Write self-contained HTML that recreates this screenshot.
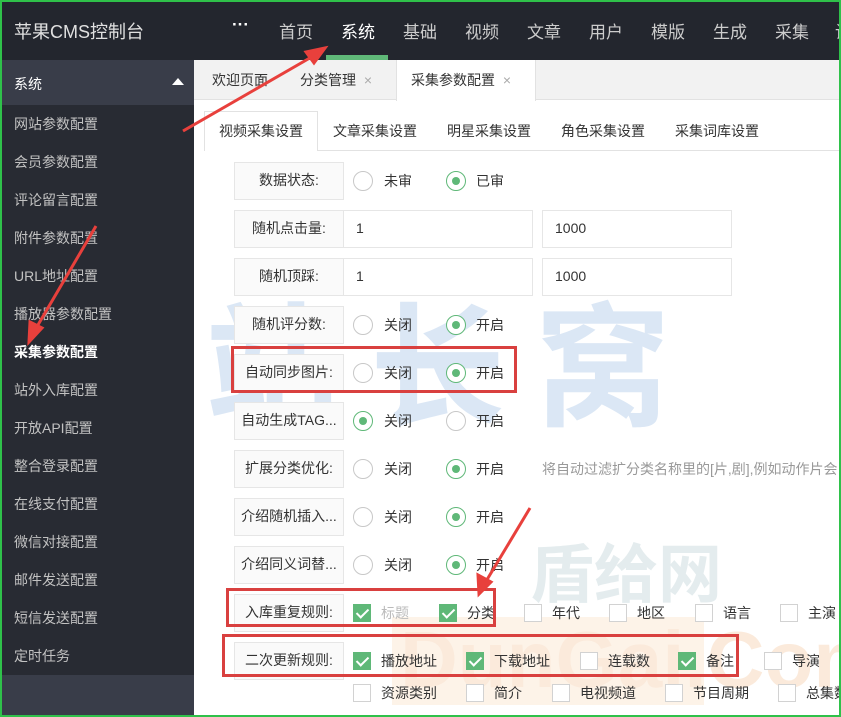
<!DOCTYPE html><html><head><meta charset="utf-8"><style>
*{margin:0;padding:0;box-sizing:border-box}
body{width:841px;height:717px;overflow:hidden;position:relative;background:#fff;font-family:"Liberation Sans","Noto Sans CJK SC",sans-serif;font-size:14px;color:#333}
.a{position:absolute}
span{white-space:nowrap}
#top{left:0;top:0;width:841px;height:60px;background:#23262e}
#top span{position:absolute;top:18px;font-size:17px;color:#ccc}
#side{left:0;top:60px;width:194px;height:657px;background:#282b33}
.si{position:absolute;left:14px;font-size:14px;color:#c2c2c2}
.lab{position:absolute;left:234px;width:110px;height:38px;border:1px solid #e6e6e6;background:#fafafa;text-align:center;line-height:34px;font-size:14px;color:#333;white-space:nowrap}
.inp{position:absolute;height:38px;border:1px solid #e6e6e6;background:#fff;line-height:34px;padding-left:12px;font-size:14px}
.r{position:absolute;width:20px;height:20px;border:1px solid #c8c8c8;border-radius:50%;background:#fff}
.r.on{border-color:#5fb878}
.r.on:after{content:"";position:absolute;left:5px;top:5px;width:8px;height:8px;border-radius:50%;background:#5fb878}
.t{position:absolute;font-size:14px;color:#333}
.c{position:absolute;width:18px;height:18px;border:1px solid #d2d2d2;background:#fff}
.c.on{background:#5fb878;border-color:#5fb878}
.c.on:after{content:"";position:absolute;left:5px;top:1px;width:5px;height:10px;border:solid #fff;border-width:0 2px 2px 0;transform:rotate(45deg)}
.red{position:absolute;border:3px solid #d9403f}
</style></head><body>
<div id="top" class="a">
<span style="left:14px;font-size:18px;color:#e0e0e0">苹果CMS控制台</span>
<span style="left:232px;top:20px;color:#fff;font-weight:bold;line-height:10px">···</span>
<span style="left:279px">首页</span><span style="left:341px;color:#fff">系统</span><span style="left:403px">基础</span><span style="left:465px">视频</span><span style="left:527px">文章</span><span style="left:589px">用户</span><span style="left:651px">模版</span><span style="left:713px">生成</span><span style="left:775px">采集</span><span style="left:835px">设</span>
<div class="a" style="left:326px;top:55px;width:62px;height:5px;background:#5fb878"></div>
</div>
<div id="side" class="a">
<div class="a" style="left:0;top:0;width:194px;height:45px;background:#393d49"></div>
<span class="si" style="top:14px;color:#fff">系统</span>
<div class="a" style="left:172px;top:18px;border:6px solid transparent;border-bottom:7px solid #fff;border-top:0"></div>
<span class="si" style="top:54px">网站参数配置</span><span class="si" style="top:92px">会员参数配置</span><span class="si" style="top:130px">评论留言配置</span><span class="si" style="top:168px">附件参数配置</span><span class="si" style="top:206px">URL地址配置</span><span class="si" style="top:244px">播放器参数配置</span><span class="si" style="top:282px;color:#fff;font-weight:bold">采集参数配置</span><span class="si" style="top:320px">站外入库配置</span><span class="si" style="top:358px">开放API配置</span><span class="si" style="top:396px">整合登录配置</span><span class="si" style="top:434px">在线支付配置</span><span class="si" style="top:472px">微信对接配置</span><span class="si" style="top:510px">邮件发送配置</span><span class="si" style="top:548px">短信发送配置</span><span class="si" style="top:586px">定时任务</span>
<div class="a" style="left:0;top:615px;width:194px;height:42px;background:#393d49"></div>
</div>
<div class="a" style="left:194px;top:60px;width:647px;height:40px;background:#f2f2f2;border-bottom:1px solid #e2e2e2"></div>
<div class="a" style="left:396px;top:60px;width:140px;height:41px;background:#fff;border-left:1px solid #e2e2e2;border-right:1px solid #e2e2e2"></div>
<span class="t" style="left:212px;top:70px">欢迎页面</span><span class="t" style="left:300px;top:70px">分类管理 <span style="color:#aaa;margin-left:4px">×</span></span><span class="t" style="left:411px;top:70px">采集参数配置 <span style="color:#aaa;margin-left:4px">×</span></span>
<div class="a" style="left:204px;top:150px;width:637px;height:1px;background:#e2e2e2"></div>
<div class="a" style="left:204px;top:111px;width:114px;height:40px;background:#fff;border:1px solid #e2e2e2;border-bottom:0"></div>
<span class="t" style="left:219px;top:121px">视频采集设置</span><span class="t" style="left:333px;top:121px">文章采集设置</span><span class="t" style="left:447px;top:121px">明星采集设置</span><span class="t" style="left:561px;top:121px">角色采集设置</span><span class="t" style="left:675px;top:121px">采集词库设置</span>
<!-- watermarks -->
<div class="a" style="left:205px;top:290px;font-size:135px;line-height:135px;font-weight:bold;color:#dbe7f5;letter-spacing:30px;font-family:'Noto Sans CJK SC',sans-serif">站长窝</div>
<div class="a" style="left:530px;top:530px;font-size:64px;line-height:80px;font-weight:bold;color:#e4ecee;font-family:'Noto Sans CJK SC',sans-serif">盾给网</div>
<div class="a" style="left:392px;top:617px;width:312px;height:88px;background:#fdf3e8"></div>
<div class="a" style="left:400px;top:615px;font-size:80px;font-weight:bold;color:#fbeadb;line-height:90px;white-space:nowrap">DunGai.Com</div>

<div class="lab" style="top:162px">数据状态:</div><div class="r" style="left:353px;top:171px"></div><span class="t" style="left:384px;top:171px">未审</span><div class="r on" style="left:446px;top:171px"></div><span class="t" style="left:476px;top:171px">已审</span>
<div class="lab" style="top:210px">随机点击量:</div><div class="inp" style="left:343px;top:210px;width:190px">1</div><div class="inp" style="left:542px;top:210px;width:190px">1000</div>
<div class="lab" style="top:258px">随机顶踩:</div><div class="inp" style="left:343px;top:258px;width:190px">1</div><div class="inp" style="left:542px;top:258px;width:190px">1000</div>
<div class="lab" style="top:306px">随机评分数:</div><div class="r" style="left:353px;top:315px"></div><span class="t" style="left:384px;top:315px">关闭</span><div class="r on" style="left:446px;top:315px"></div><span class="t" style="left:476px;top:315px">开启</span>
<div class="lab" style="top:354px">自动同步图片:</div><div class="r" style="left:353px;top:363px"></div><span class="t" style="left:384px;top:363px">关闭</span><div class="r on" style="left:446px;top:363px"></div><span class="t" style="left:476px;top:363px">开启</span>
<div class="lab" style="top:402px">自动生成TAG...</div><div class="r on" style="left:353px;top:411px"></div><span class="t" style="left:384px;top:411px">关闭</span><div class="r" style="left:446px;top:411px"></div><span class="t" style="left:476px;top:411px">开启</span>
<div class="lab" style="top:450px">扩展分类优化:</div><div class="r" style="left:353px;top:459px"></div><span class="t" style="left:384px;top:459px">关闭</span><div class="r on" style="left:446px;top:459px"></div><span class="t" style="left:476px;top:459px">开启</span><span class="t" style="left:542px;top:459px;color:#999">将自动过滤扩分类名称里的[片,剧],例如动作片会</span>
<div class="lab" style="top:498px">介绍随机插入...</div><div class="r" style="left:353px;top:507px"></div><span class="t" style="left:384px;top:507px">关闭</span><div class="r on" style="left:446px;top:507px"></div><span class="t" style="left:476px;top:507px">开启</span>
<div class="lab" style="top:546px">介绍同义词替...</div><div class="r" style="left:353px;top:555px"></div><span class="t" style="left:384px;top:555px">关闭</span><div class="r on" style="left:446px;top:555px"></div><span class="t" style="left:476px;top:555px">开启</span>
<div class="lab" style="top:594px">入库重复规则:</div>
<div class="c on" style="left:353px;top:604px"></div><span class="t" style="left:381px;top:603px;color:#bbb">标题</span><div class="c on" style="left:439px;top:604px"></div><span class="t" style="left:467px;top:603px">分类</span><div class="c" style="left:524px;top:604px"></div><span class="t" style="left:552px;top:603px">年代</span><div class="c" style="left:609px;top:604px"></div><span class="t" style="left:637px;top:603px">地区</span><div class="c" style="left:695px;top:604px"></div><span class="t" style="left:723px;top:603px">语言</span><div class="c" style="left:780px;top:604px"></div><span class="t" style="left:808px;top:603px">主演</span>
<div class="lab" style="top:642px">二次更新规则:</div>
<div class="c on" style="left:353px;top:652px"></div><span class="t" style="left:381px;top:651px">播放地址</span><div class="c on" style="left:466px;top:652px"></div><span class="t" style="left:494px;top:651px">下载地址</span><div class="c" style="left:580px;top:652px"></div><span class="t" style="left:608px;top:651px">连载数</span><div class="c on" style="left:678px;top:652px"></div><span class="t" style="left:706px;top:651px">备注</span><div class="c" style="left:764px;top:652px"></div><span class="t" style="left:792px;top:651px">导演</span>
<div class="c" style="left:353px;top:684px"></div><span class="t" style="left:381px;top:683px">资源类别</span><div class="c" style="left:466px;top:684px"></div><span class="t" style="left:494px;top:683px">简介</span><div class="c" style="left:552px;top:684px"></div><span class="t" style="left:580px;top:683px">电视频道</span><div class="c" style="left:665px;top:684px"></div><span class="t" style="left:693px;top:683px">节目周期</span><div class="c" style="left:778px;top:684px"></div><span class="t" style="left:806px;top:683px">总集数</span>
<div class="red" style="left:231px;top:346px;width:286px;height:47px"></div>
<div class="red" style="left:226px;top:588px;width:270px;height:39px"></div>
<div class="red" style="left:222px;top:634px;width:517px;height:43px"></div>
<svg class="a" style="left:0;top:0" width="841" height="717">
<g stroke="#e8403c" stroke-width="3" fill="#e8403c">
<line x1="183" y1="131" x2="315" y2="55"/><polygon points="325,48 306,52 314,63"/>
<line x1="96" y1="226" x2="35" y2="330"/><polygon points="29,342 30,322 42,328"/>
<line x1="530" y1="508" x2="485" y2="583"/><polygon points="479,594 478,575 491,582"/>
</g></svg>
<div class="a" style="left:0;top:0;width:841px;height:717px;border:2px solid #2fc14a"></div>
</body></html>
